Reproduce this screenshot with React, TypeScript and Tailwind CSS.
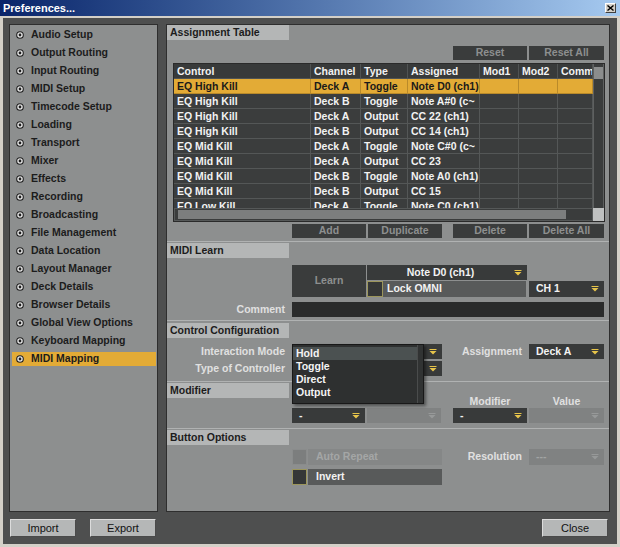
import React from "react";

const font = "font-['Liberation_Sans',Arial,sans-serif]";

const navItems = [
  "Audio Setup",
  "Output Routing",
  "Input Routing",
  "MIDI Setup",
  "Timecode Setup",
  "Loading",
  "Transport",
  "Mixer",
  "Effects",
  "Recording",
  "Broadcasting",
  "File Management",
  "Data Location",
  "Layout Manager",
  "Deck Details",
  "Browser Details",
  "Global View Options",
  "Keyboard Mapping",
  "MIDI Mapping",
];

const headers = ["Control", "Channel", "Type", "Assigned", "Mod1", "Mod2", "Comm"];
const colW = ["w-[137px]", "w-[50px]", "w-[47px]", "w-[72px]", "w-[39px]", "w-[39px]", "w-[35px]"];

const rows = [
  ["EQ High Kill", "Deck A", "Toggle", "Note D0 (ch1)"],
  ["EQ High Kill", "Deck B", "Toggle", "Note A#0 (c~"],
  ["EQ High Kill", "Deck A", "Output", "CC 22 (ch1)"],
  ["EQ High Kill", "Deck B", "Output", "CC 14 (ch1)"],
  ["EQ Mid Kill", "Deck A", "Toggle", "Note C#0 (c~"],
  ["EQ Mid Kill", "Deck A", "Output", "CC 23"],
  ["EQ Mid Kill", "Deck B", "Toggle", "Note A0 (ch1)"],
  ["EQ Mid Kill", "Deck B", "Output", "CC 15"],
  ["EQ Low Kill", "Deck A", "Toggle", "Note C0 (ch1)"],
];

function Radio() {
  return (
    <svg width="8" height="8" viewBox="0 0 8 8" className="shrink-0">
      <circle cx="4" cy="4" r="3.3" fill="#ececec" stroke="#1e1e1e" strokeWidth="1.1" />
      <circle cx="4" cy="4" r="1.4" fill="#1e1e1e" />
    </svg>
  );
}

function Arrow({ dim }: { dim?: boolean }) {
  const c = dim ? "#979999" : "#e6c44a";
  return (
    <svg width="8" height="6" viewBox="0 0 8 6" className="shrink-0 mr-[5px]">
      <rect x="0.5" y="0" width="7" height="1" fill={c} />
      <path d="M0.5 2 L7.5 2 L4 5.5 Z" fill={c} />
    </svg>
  );
}

function Drop({
  w,
  text,
  center,
  disabled,
  pl = "pl-[7px]",
}: {
  w: string;
  text: string;
  center?: boolean;
  disabled?: boolean;
  pl?: string;
}) {
  return (
    <div
      className={`${w} h-full shrink-0 flex items-center ${
        disabled ? "bg-[#808282]" : "bg-[#383a3a]"
      }`}
    >
      <span
        className={`flex-1 overflow-hidden whitespace-nowrap font-bold text-[10.5px] ${
          center ? "text-center" : pl
        } ${disabled ? "text-[#a2a4a4]" : "text-[#f2f2f2]"}`}
      >
        {text}
      </span>
      <Arrow dim={disabled} />
    </div>
  );
}

function DarkBtn({ w, label, h = "h-full" }: { w: string; label: string; h?: string }) {
  return (
    <div
      className={`${w} ${h} shrink-0 bg-[#3a3c3c] flex items-center justify-center text-[#8d8f8f] font-bold text-[10.5px]`}
    >
      {label}
    </div>
  );
}

function SectionHeader({ label }: { label: string }) {
  return (
    <div className="w-[122px] h-[15px] bg-[#b4b6b6] pl-[3px] text-[#1c1c1c] font-bold text-[10.5px] leading-[15px] whitespace-nowrap">
      {label}
    </div>
  );
}

function Divider() {
  return <div className="h-px bg-[#b0b2b2]" />;
}

function Label({ text }: { text: string }) {
  return (
    <div className="w-[118px] shrink-0 text-right text-[#e0e0e0] font-bold text-[10.5px] whitespace-nowrap">
      {text}
    </div>
  );
}

function GrayBtn({ label, w }: { label: string; w: string }) {
  return (
    <div
      className={`${w} h-full bg-[#b5b7b7] border border-t-[#dcdcdc] border-l-[#dcdcdc] border-b-[#4a4a4a] border-r-[#4a4a4a] flex items-center justify-center text-[11px] text-[#111]`}
    >
      {label}
    </div>
  );
}

function Table() {
  return (
    <div className="ml-[6px] mt-[3px] w-[432px] h-[159px] border border-[#2a2a2a] bg-[#3b3d3d] flex flex-col">
      <div className="flex h-[144px]">
        <div className="w-[419px] overflow-hidden">
          <div className="flex h-[15px] bg-[#383a3a]">
            {headers.map((h, i) => (
              <div
                key={h}
                className={`${colW[i]} shrink-0 h-[15px] leading-[15px] pl-[3px] overflow-hidden whitespace-nowrap font-bold text-[10.5px] text-[#f2f2f2] border-r border-b border-[#505353]`}
              >
                {h}
              </div>
            ))}
          </div>
          {rows.map((r, ri) => {
            const sel = ri === 0;
            const cells = [...r, "", "", ""];
            return (
              <div key={ri} className={`flex h-[15px] ${sel ? "bg-[#e3ab36]" : ""}`}>
                {cells.map((c, i) => (
                  <div
                    key={i}
                    className={`${colW[i]} shrink-0 h-[15px] leading-[15px] pl-[3px] overflow-hidden whitespace-nowrap font-bold text-[10.5px] border-r border-b ${
                      sel ? "text-[#1a1a1a] border-[#b98a2a]" : "text-[#f2f2f2] border-[#545757]"
                    }`}
                  >
                    {c}
                  </div>
                ))}
              </div>
            );
          })}
        </div>
        <div className="w-[11px] bg-[#3a3c3c] border-x border-[#5e6060] pt-[3px]">
          <div className="h-[12px] bg-[#8b8d8d]" />
        </div>
      </div>
      <div className="flex h-[13px]">
        <div className="w-[419px] bg-[#3a3c3c] border border-[#555858] pl-[3px] pt-[1px]">
          <div className="w-[388px] h-[9px] bg-[#7c7e7e]" />
        </div>
        <div className="w-[11px] bg-[#bfc1c1]" />
      </div>
    </div>
  );
}

export default function App() {
  return (
    <div className={`${font} w-[620px] h-[547px] bg-[#d4d0c8] flex flex-col select-none`}>
      {/* Title bar */}
      <div className="h-[16px] bg-gradient-to-r from-[#0a246a] to-[#a6caf0] flex items-center justify-between pl-[3px] pr-[4px]">
        <span className="text-white font-bold text-[11px]">Preferences...</span>
        <div className="w-[11px] h-[10px] bg-[#d4d0c8] border border-t-white border-l-white border-b-[#404040] border-r-[#404040] flex items-center justify-center">
          <svg width="7" height="6" viewBox="0 0 7 6">
            <path d="M0.5 0.5 L6.5 5.5 M6.5 0.5 L0.5 5.5" stroke="#000" strokeWidth="1.4" />
          </svg>
        </div>
      </div>
      <div className="h-[2px] bg-[#d4d0c8]" />
      {/* Body */}
      <div className="flex-1 mx-[3px] mb-[3px] bg-[#4e4f4f] flex flex-col pt-[6px] pl-[6px] pr-[7px] pb-[7px]">
        <div className="flex gap-[8px] h-[488px]">
          {/* Sidebar */}
          <div className="w-[149px] h-full bg-[#8d8f8f] border border-[#2e2e2e] pt-[1px]">
            {navItems.map((n) => {
              const sel = n === "MIDI Mapping";
              return (
                <div key={n} className="h-[18px] py-[2px] ml-[2px] mr-[1px]">
                  <div
                    className={`h-[14px] flex items-center pl-[4px] gap-[7px] text-[10.5px] font-bold text-[#1c1c1c] whitespace-nowrap ${
                      sel ? "bg-[#e3ab36]" : ""
                    }`}
                  >
                    <Radio />
                    <span>{n}</span>
                  </div>
                </div>
              );
            })}
          </div>
          {/* Main panel */}
          <div className="flex-1 h-full bg-[#8d8f8f] border border-[#2e2e2e] flex flex-col">
            <SectionHeader label="Assignment Table" />
            <div className="mt-[6px] h-[14px] flex justify-end pr-[5px] gap-[2px]">
              <DarkBtn w="w-[74px]" label="Reset" />
              <DarkBtn w="w-[75px]" label="Reset All" />
            </div>
            <Table />
            <div className="mt-[2px] h-[14px] flex pl-[125px]">
              <DarkBtn w="w-[74px]" label="Add" />
              <div className="w-[2px]" />
              <DarkBtn w="w-[74px]" label="Duplicate" />
              <div className="w-[11px]" />
              <DarkBtn w="w-[74px]" label="Delete" />
              <div className="w-[2px]" />
              <DarkBtn w="w-[75px]" label="Delete All" />
            </div>

            <div className="mt-[3px]">
              <Divider />
            </div>
            <div className="mt-[1px]">
              <SectionHeader label="MIDI Learn" />
            </div>
            <div className="mt-[7px] h-[32px] flex pl-[125px]">
              <DarkBtn w="w-[74px]" label="Learn" />
              <div className="ml-[1px] flex flex-col gap-[1px]">
                <div className="h-[15px] flex">
                  <Drop w="w-[160px]" text="Note D0 (ch1)" center />
                </div>
                <div className="h-[16px] flex">
                  <div className="w-[16px] h-full bg-[#353737] border border-[#9c965c]" />
                  <div className="w-[143px] h-full bg-[#585a5a] pl-[4px] flex items-center text-[#f2f2f2] font-bold text-[10.5px]">
                    Lock OMNI
                  </div>
                  <div className="w-[3px]" />
                  <Drop w="w-[75px]" text="CH 1" />
                </div>
              </div>
            </div>
            <div className="mt-[5px] h-[15px] flex items-center pr-[5px]">
              <Label text="Comment" />
              <div className="w-[7px]" />
              <div className="flex-1 h-full bg-[#2a2b2b]" />
            </div>

            <div className="mt-[3px]">
              <Divider />
            </div>
            <div className="mt-[2px]">
              <SectionHeader label="Control Configuration" />
            </div>
            <div className="relative mt-[6px] h-[15px] flex items-center pr-[5px]">
              <Label text="Interaction Mode" />
              <div className="w-[7px]" />
              <Drop w="w-[150px]" text="Hold" />
              <div className="flex-1 text-right pr-[7px] text-[#e0e0e0] font-bold text-[10.5px]">Assignment</div>
              <Drop w="w-[75px]" text="Deck A" />
              {/* Open popup */}
              <div className="absolute left-[125px] top-0 w-[132px] h-[60px] z-10 bg-[#2e3030] border border-[#181818] shadow-[2px_2px_3px_rgba(0,0,0,0.45)] flex">
                <div className="flex-1 pt-[2px]">
                  {["Hold", "Toggle", "Direct", "Output"].map((o, i) => (
                    <div
                      key={o}
                      className={`h-[13px] leading-[13px] pl-[3px] text-[#f4f4f4] font-bold text-[10.5px] ${
                        i === 0 ? "bg-[#4b5151]" : ""
                      }`}
                    >
                      {o}
                    </div>
                  ))}
                </div>
                <div className="w-[6px] border-l border-[#4a4c4c] bg-[#313333]" />
              </div>
            </div>
            <div className="mt-[2px] h-[15px] flex items-center pr-[5px]">
              <Label text="Type of Controller" />
              <div className="w-[7px]" />
              <Drop w="w-[150px]" text="Toggle" />
            </div>

            <div className="mt-[5px]">
              <Divider />
            </div>
            <div className="mt-[1px]">
              <SectionHeader label="Modifier" />
            </div>
            <div className="mt-[-2px] h-[11px] flex pl-[286px] pr-[5px] text-[#e0e0e0] font-bold text-[10.5px] leading-[11px]">
              <div className="w-[74px] text-center">Modifier</div>
              <div className="w-[2px]" />
              <div className="w-[75px] text-center">Value</div>
            </div>
            <div className="mt-[1px] h-[15px] flex pl-[125px]">
              <Drop w="w-[73px]" text="-" />
              <div className="w-[2px]" />
              <Drop w="w-[74px]" text="" disabled />
              <div className="w-[12px]" />
              <Drop w="w-[74px]" text="-" />
              <div className="w-[2px]" />
              <Drop w="w-[75px]" text="" disabled />
            </div>

            <div className="mt-[5px]">
              <Divider />
            </div>
            <div className="mt-[1px]">
              <SectionHeader label="Button Options" />
            </div>
            <div className="mt-[4px] h-[16px] flex items-center pl-[125px] pr-[5px]">
              <div className="w-[15px] h-full bg-[#7c7e7e] border border-[#8a8c8c]" />
              <div className="w-[1px]" />
              <div className="w-[134px] h-full bg-[#858787] pl-[8px] flex items-center text-[#a4a6a6] font-bold text-[10.5px]">
                Auto Repeat
              </div>
              <div className="flex-1 text-right pr-[7px] text-[#e0e0e0] font-bold text-[10.5px]">Resolution</div>
              <Drop w="w-[75px]" text="---" disabled />
            </div>
            <div className="mt-[4px] h-[16px] flex items-center pl-[125px]">
              <div className="w-[15px] h-full bg-[#353737] border border-[#9c965c]" />
              <div className="w-[1px]" />
              <div className="w-[134px] h-full bg-[#585a5a] pl-[8px] flex items-center text-[#f2f2f2] font-bold text-[10.5px]">
                Invert
              </div>
            </div>
          </div>
        </div>
        {/* Footer */}
        <div className="mt-[7px] h-[18px] flex items-center">
          <div className="ml-[1px]">
            <GrayBtn label="Import" w="w-[66px]" />
          </div>
          <div className="ml-[14px]">
            <GrayBtn label="Export" w="w-[66px]" />
          </div>
          <div className="flex-1" />
          <div className="mr-[2px]">
            <GrayBtn label="Close" w="w-[66px]" />
          </div>
        </div>
      </div>
    </div>
  );
}
